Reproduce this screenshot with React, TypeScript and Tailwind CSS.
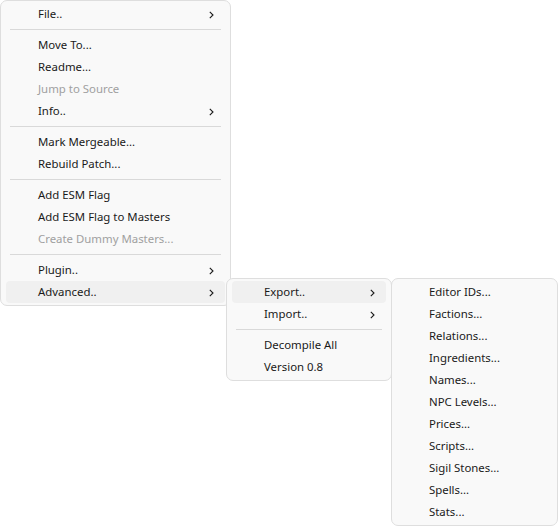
import type { ReactNode } from "react";

type Entry =
  | { sep: true }
  | { label: string; sub?: boolean; disabled?: boolean; active?: boolean };

const mainMenu: Entry[] = [
  { label: "File..", sub: true },
  { sep: true },
  { label: "Move To..." },
  { label: "Readme..." },
  { label: "Jump to Source", disabled: true },
  { label: "Info..", sub: true },
  { sep: true },
  { label: "Mark Mergeable..." },
  { label: "Rebuild Patch..." },
  { sep: true },
  { label: "Add ESM Flag" },
  { label: "Add ESM Flag to Masters" },
  { label: "Create Dummy Masters...", disabled: true },
  { sep: true },
  { label: "Plugin..", sub: true },
  { label: "Advanced..", sub: true, active: true },
];

const advancedMenu: Entry[] = [
  { label: "Export..", sub: true, active: true },
  { label: "Import..", sub: true },
  { sep: true },
  { label: "Decompile All" },
  { label: "Version 0.8" },
];

const exportMenu: Entry[] = [
  "Editor IDs...",
  "Factions...",
  "Relations...",
  "Ingredients...",
  "Names...",
  "NPC Levels...",
  "Prices...",
  "Scripts...",
  "Sigil Stones...",
  "Spells...",
  "Stats...",
].map((label) => ({ label }));

function Chevron() {
  return (
    <svg width="5" height="8" viewBox="0 0 5 8" className="absolute right-[11px] top-[8px]">
      <path d="M0.8 0.8 L4 4 L0.8 7.2" fill="none" stroke="#1a1a1a" strokeWidth="1.1" />
    </svg>
  );
}

function Menu({ items, className }: { items: Entry[]; className: string }) {
  return (
    <div
      className={`absolute bg-[#f9f9f9] border border-[#dedede] rounded-[7px] px-[5px] py-[2px] ${className}`}
    >
      {items.map((it, i) =>
        "sep" in it ? (
          <div key={i} className="py-[4px] px-[4px]">
            <div className="h-px bg-[#d9d9d9]" />
          </div>
        ) : (
          <div
            key={i}
            className={`relative h-[22px] flex items-center pl-[32px] rounded-[4px] ${
              it.active ? "bg-[#f0f0f0]" : ""
            } ${it.disabled ? "text-[#a0a0a0]" : "text-[#1a1a1a]"}`}
          >
            {it.label}
            {it.sub && <Chevron />}
          </div>
        )
      )}
    </div>
  );
}

export default function App(): ReactNode {
  return (
    <div
      className="relative w-[558px] h-[526px] bg-white overflow-hidden text-[11.4px] leading-none"
      style={{ fontFamily: '"Noto Sans", "Open Sans", sans-serif' }}
    >
      <Menu items={mainMenu} className="left-0 top-0 w-[231px]" />
      <Menu items={advancedMenu} className="left-[226px] top-[278px] w-[166px]" />
      <Menu items={exportMenu} className="left-[391px] top-[278px] w-[167px]" />
    </div>
  );
}
